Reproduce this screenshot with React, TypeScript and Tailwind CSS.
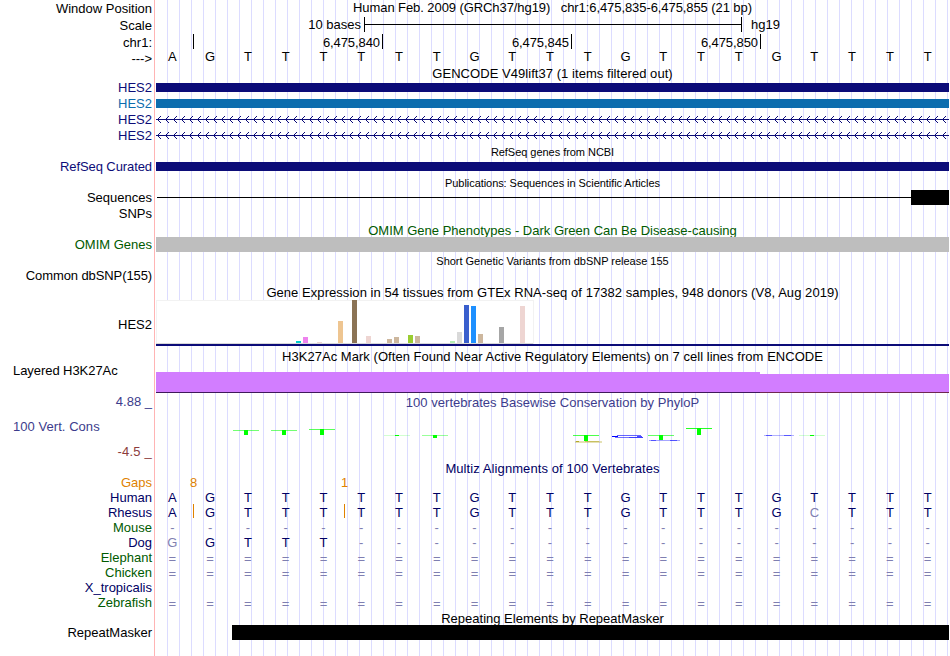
import React from "react";

type RowProps = {
  h: string;
  label?: string;
  labelClass?: string;
  children?: React.ReactNode;
};

/** One horizontal slice of the browser: left label, separator gap, track data. */
function Row({ h, label, labelClass = "", children }: RowProps) {
  return (
    <div className={`flex shrink-0 ${h}`}>
      <div className={`w-[156px] shrink-0 pr-1 text-right ${labelClass}`}>{label}</div>
      <div className="h-full w-[793px] shrink-0">{children}</div>
    </div>
  );
}

function Title({ children, className = "" }: { children: React.ReactNode; className?: string }) {
  return <div className={`text-center ${className}`}>{children}</div>;
}

const SMALL = "pt-0.5 text-[11px] leading-[12px]";
const NAVY = "text-[#0c0c78]";
const DARK = "text-[#000064]";
const GREEN = "text-[#005a00]";

function Bases({ seq, className = "", faint }: { seq: string; className?: string; faint?: number }) {
  return (
    <div className={`-ml-[2.5px] grid w-[793px] grid-cols-[repeat(21,minmax(0,1fr))] text-center ${className}`}>
      {seq.split("").map((c, i) => (
        <span key={i} className={i === faint || c === "-" || c === "=" ? "text-[#7f7fb1]" : ""}>
          {c}
        </span>
      ))}
    </div>
  );
}

function Intron() {
  const xs = Array.from({ length: 99 }, (_, i) => 1 + Math.round(i * 8.01));
  return (
    <svg width="793" height="16" className="block" shapeRendering="crispEdges">
      <rect x="0" y="7" width="793" height="1" fill="#0c0c78" />
      {xs.map((x) => (
        <g key={x} fill="#0c0c78">
          <rect x={x + 1} y="6" width="1" height="3" />
          <rect x={x + 2} y="5" width="1" height="1" />
          <rect x={x + 2} y="9" width="1" height="1" />
          <rect x={x + 3} y="4" width="1" height="1" />
          <rect x={x + 3} y="10" width="1" height="1" />
        </g>
      ))}
    </svg>
  );
}

const TISSUES: [number, number, string][] = [
  [296, 341, "#00cdcd"],
  [303, 337, "#ee82ee"],
  [317, 342, "#eed5d2"],
  [338, 321, "#eec591"],
  [352, 300, "#8b7355"],
  [366, 336, "#eed5d2"],
  [387, 339, "#cdb79e"],
  [394, 337, "#cdb79e"],
  [408, 335, "#9acd32"],
  [415, 336, "#cdb79e"],
  [450, 341, "#b4eeb4"],
  [457, 332, "#d9d9d9"],
  [464, 305, "#3a5fcd"],
  [471, 306, "#1e90ff"],
  [478, 334, "#cdb79e"],
  [499, 327, "#a6a6a6"],
  [520, 306, "#eed5d2"],
];

function Expression() {
  return (
    <svg width="793" height="50" viewBox="156 299 793 50" className="block" shapeRendering="crispEdges">
      <rect x="156" y="300" width="378" height="44" fill="#f2f2f2" />
      <rect x="157" y="301" width="376" height="42" fill="#ffffff" />
      <rect x="156" y="343" width="377" height="1" fill="#d8d8d8" />
      {TISSUES.map(([x, y, fill]) => (
        <rect key={x} x={x} y={y} width="5" height={343 - y} fill={fill} />
      ))}
      <rect x="156" y="344" width="793" height="2" fill="#0c0c78" />
    </svg>
  );
}

// x of the bar, y of its top, stem bottom, opacity of the cross stroke
const CONSERVED: [number, number, number, number][] = [
  [233, 430, 435, 0.55],
  [271, 430, 435, 0.55],
  [309, 429, 435, 0.65],
  [384, 435, 436, 0.18],
  [422, 435, 438, 0.4],
  [573, 435, 441, 0.7],
  [648, 435, 440, 0.6],
  [686, 428, 435, 0.85],
  [799, 435, 436, 0.18],
];

function Conservation() {
  return (
    <svg width="793" height="35" viewBox="156 409 793 35" className="block" shapeRendering="crispEdges">
      {CONSERVED.map(([x, y, bottom, o]) => (
        <g key={x} fill="#00ff00">
          <rect x={x} y={y} width="26" height="1" fillOpacity={o} />
          <rect x={x + 11} y={y} width="4" height={bottom - y} />
        </g>
      ))}
      <rect x="575" y="441" width="27" height="2" fill="#b4aa28" fillOpacity="0.35" />
      <rect x="576" y="441" width="3" height="1" fill="#b4aa28" />
      <rect x="585" y="441" width="14" height="1" fill="#b4aa28" fillOpacity="0.6" />
      <g fill="#0000ff">
        <rect x="617" y="435" width="24" height="1" fillOpacity="0.6" />
        <rect x="612" y="436" width="6" height="1" />
        <rect x="637" y="436" width="5" height="1" fillOpacity="0.7" />
        <rect x="615" y="437" width="14" height="1" fillOpacity="0.55" />
        <rect x="629" y="437" width="14" height="1" fillOpacity="0.75" />
        <rect x="649" y="440" width="31" height="1" fillOpacity="0.35" />
        <rect x="651" y="440" width="5" height="1" fillOpacity="0.5" />
        <rect x="670" y="440" width="7" height="1" fillOpacity="0.5" />
        <rect x="764" y="435" width="30" height="1" fillOpacity="0.3" />
        <rect x="766" y="435" width="6" height="1" fillOpacity="0.5" />
        <rect x="784" y="435" width="7" height="1" fillOpacity="0.5" />
      </g>
    </svg>
  );
}

function Tick() {
  return <div className="h-[15px] w-px shrink-0 bg-black" />;
}

const HUMAN = "AGTTTTTTGTTTGTTTGTTTT";
const DASHES = "---------------------";
const EQUALS = "=====================";

export default function App() {
  return (
    <div className="h-[656px] w-[950px] overflow-hidden bg-white font-['Liberation_Sans',Arial,sans-serif] text-[13px] leading-[15px] whitespace-pre text-black">
      <div className="flex h-full w-[949px] flex-col bg-[linear-gradient(to_right,transparent_154px,#ffb4b4_154px,#ffb4b4_155px,#fff_155px,#fff_157px,transparent_157px),repeating-linear-gradient(to_right,#fff_0px,#fff_11px,#dcdcff_11px,#dcdcff_12px)] bg-no-repeat bg-[position:0_0,156px_0]">
        <Row h="h-4" label="Window Position" labelClass="pt-px">
          <Title className="tracking-[-0.08px]">{"Human Feb. 2009 (GRCh37/hg19)   chr1:6,475,835-6,475,855 (21 bp)"}</Title>
        </Row>
        <Row h="h-[18px]" label="Scale" labelClass="pt-0.5">
          <div className="flex pt-px">
            <div className="w-[208px] pr-[3px] text-right">10 bases</div>
            <Tick />
            <div className="mt-[7px] h-px w-[376px] bg-black" />
            <Tick />
            <div className="pl-[9px]">hg19</div>
          </div>
        </Row>
        <Row h="h-[15px]" label="chr1:" labelClass="pt-px">
          <div className="flex pl-[37px]">
            <Tick />
            {["6,475,840", "6,475,845", "6,475,850"].map((n) => (
              <React.Fragment key={n}>
                <div className="w-[188px] pt-px pr-[2px] text-right tracking-[-0.08px]">{n}</div>
                <Tick />
              </React.Fragment>
            ))}
          </div>
        </Row>
        <Row h="h-[17px]" label="--->" labelClass="pt-0.5">
          <Bases seq={HUMAN} />
        </Row>
        <Row h="h-[14px]">
          <Title className="tracking-[0.05px]">GENCODE V49lift37 (1 items filtered out)</Title>
        </Row>
        <Row h="h-4" label="HES2" labelClass={NAVY}>
          <div className="pt-[3px]"><div className="h-[9px] bg-[#0c0c78]" /></div>
        </Row>
        <Row h="h-4" label="HES2" labelClass="text-[#0c6cae]">
          <div className="pt-[3px]"><div className="h-[9px] bg-[#0c6cae]" /></div>
        </Row>
        <Row h="h-4" label="HES2" labelClass={NAVY}><Intron /></Row>
        <Row h="h-4" label="HES2" labelClass={NAVY}><Intron /></Row>
        <Row h="h-[15px]">
          <Title className={`${SMALL} tracking-[-0.04px]`}>RefSeq genes from NCBI</Title>
        </Row>
        <Row h="h-4" label="RefSeq Curated" labelClass={`tracking-[-0.09px] ${NAVY}`}>
          <div className="pt-[3px]"><div className="h-[9px] bg-[#0c0c78]" /></div>
        </Row>
        <Row h="h-[15px]">
          <Title className={`${SMALL} tracking-[-0.06px]`}>Publications: Sequences in Scientific Articles</Title>
        </Row>
        <Row h="h-4" label="Sequences">
          <div className="flex pl-px">
            <div className="mt-[7px] h-px w-[754px] bg-black" />
            <div className="h-[15px] w-[38px] bg-black" />
          </div>
        </Row>
        <Row h="h-[17px]" label="SNPs" />
        <Row h="h-[14px]">
          <Title className={`h-[14px] overflow-hidden ${GREEN}`}>OMIM Gene Phenotypes - Dark Green Can Be Disease-causing</Title>
        </Row>
        <Row h="h-4" label="OMIM Genes" labelClass={GREEN}>
          <div className="h-[15px] bg-[#bebebe]" />
        </Row>
        <Row h="h-[15px]">
          <Title className={`${SMALL} tracking-[-0.02px]`}>Short Genetic Variants from dbSNP release 155</Title>
        </Row>
        <Row h="h-[17px]" label="Common dbSNP(155)" labelClass="tracking-[-0.1px]" />
        <Row h="h-[14px]">
          <Title className="tracking-[0.055px]">Gene Expression in 54 tissues from GTEx RNA-seq of 17382 samples, 948 donors (V8, Aug 2019)</Title>
        </Row>
        <Row h="h-[50px]" label="HES2" labelClass="pt-[18px]"><Expression /></Row>
        <Row h="h-[14px]">
          <Title className="tracking-[0.04px]">H3K27Ac Mark (Often Found Near Active Regulatory Elements) on 7 cell lines from ENCODE</Title>
        </Row>
        <Row h="h-[31px]" label="Layered H3K27Ac" labelClass="pl-[13px] !text-left tracking-[-0.06px]">
          <div className="flex pt-[9px]">
            <div className="h-[21px] w-[604px] border-b border-[#3f1a5a] bg-[#d27dff]" />
            <div className="mt-0.5 h-[19px] w-[189px] border-b border-[#6e2850] bg-[#d27dff]" />
          </div>
        </Row>
        <Row h="h-[15px]" label="4.88 _" labelClass="text-[#3c3c8c]">
          <Title className="pt-px tracking-[0.03px] text-[#3c3c8c]">100 vertebrates Basewise Conservation by PhyloP</Title>
        </Row>
        <Row h="h-[35px]" label="100 Vert. Cons" labelClass="pt-[10px] pl-[13px] !text-left tracking-[0.05px] text-[#3c3c8c]">
          <Conservation />
        </Row>
        <Row h="h-[17px]" label="-4.5 _" labelClass="tracking-[0.2px] text-[#8c3c3c]" />
        <Row h="h-[14px]">
          <Title className={`tracking-[0.09px] ${DARK}`}>Multiz Alignments of 100 Vertebrates</Title>
        </Row>
        <Row h="h-[15px]" label="Gaps" labelClass="text-[#e08200]">
          <div className="flex pl-[34px] text-[#e08200]">
            <span className="w-[151px]">8</span>
            <span>1</span>
          </div>
        </Row>
        <Row h="h-[15px]" label="Human" labelClass={DARK}><Bases seq={HUMAN} className={DARK} /></Row>
        <Row h="h-[15px]" label="Rhesus" labelClass={DARK}>
          <div className="relative">
            <Bases seq="AGTTTTTTGTTTGTTTGCTTT" faint={17} className={DARK} />
            <div className="absolute -top-px left-[37px] h-[14px] w-px bg-[#e08200]" />
            <div className="absolute -top-px left-[188px] h-[14px] w-px bg-[#e08200]" />
          </div>
        </Row>
        <Row h="h-[15px]" label="Mouse" labelClass={GREEN}><Bases seq={DASHES} /></Row>
        <Row h="h-[15px]" label="Dog" labelClass={DARK}>
          <Bases seq="GGTTT----------------" faint={0} className={DARK} />
        </Row>
        <Row h="h-[15px]" label="Elephant" labelClass={GREEN}><Bases seq={EQUALS} className="pt-px" /></Row>
        <Row h="h-[15px]" label="Chicken" labelClass={GREEN}><Bases seq={EQUALS} className="pt-px" /></Row>
        <Row h="h-[15px]" label="X_tropicalis" labelClass={DARK} />
        <Row h="h-[15px]" label="Zebrafish" labelClass={GREEN}><Bases seq={EQUALS} className="pt-px" /></Row>
        <Row h="h-[15px]">
          <Title className="pt-px">Repeating Elements by RepeatMasker</Title>
        </Row>
        <Row h="h-[31px]" label="RepeatMasker">
          <div className="relative ml-[76px] h-[15px] bg-black" />
        </Row>
      </div>
    </div>
  );
}
